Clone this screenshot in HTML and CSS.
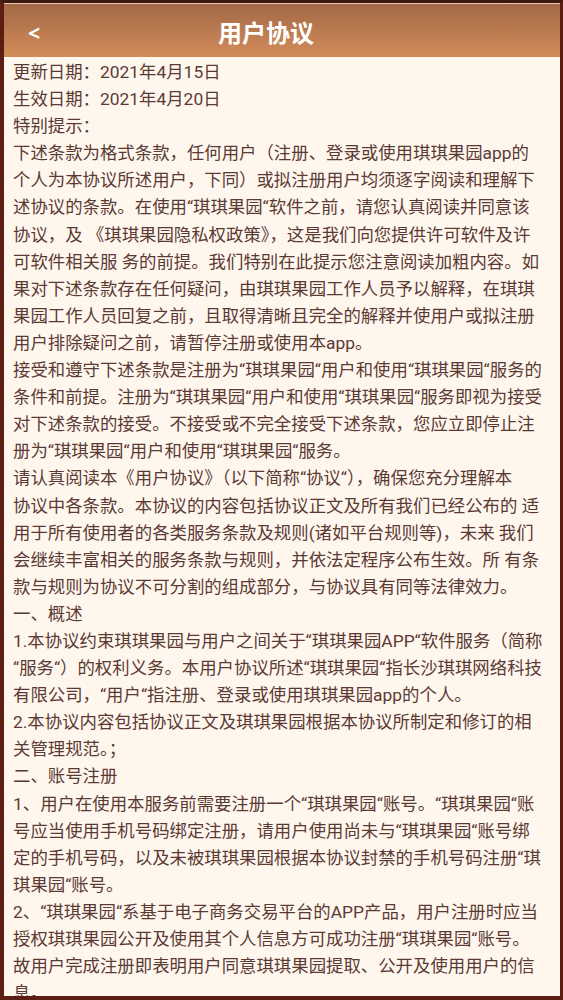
FILE: index.html
```html
<!DOCTYPE html>
<html lang="zh-CN">
<head>
<meta charset="utf-8">
<title>用户协议</title>
<link rel="stylesheet" href="styles.css">
</head>
<body>
<div class="frame">
  <header class="header">
    <span class="back">&lt;</span>
    <h1 class="title">用户协议</h1>
  </header>
  <main class="content">
    <p class="para">更新日期：2021年4月15日<br>生效日期：2021年4月20日<br>特别提示：</p>
    <p class="para">下述条款为格式条款，任何用户（注册、登录或使用琪琪果园app的<br>个人为本协议所述用户，下同）或拟注册用户均须逐字阅读和理解下<br>述协议的条款。在使用“琪琪果园“软件之前，请您认真阅读并同意该<br>协议，及 《琪琪果园隐私权政策》，这是我们向您提供许可软件及许<br>可软件相关服 务的前提。我们特别在此提示您注意阅读加粗内容。如<br>果对下述条款存在任何疑问，由琪琪果园工作人员予以解释，在琪琪<br>果园工作人员回复之前，且取得清晰且完全的解释并使用户或拟注册<br>用户排除疑问之前，请暂停注册或使用本app。</p>
    <p class="para">接受和遵守下述条款是注册为“琪琪果园“用户和使用“琪琪果园“服务的<br>条件和前提。注册为“琪琪果园“用户和使用“琪琪果园“服务即视为接受<br>对下述条款的接受。不接受或不完全接受下述条款，您应立即停止注<br>册为“琪琪果园“用户和使用“琪琪果园“服务。</p>
    <p class="para">请认真阅读本《用户协议》（以下简称“协议“），确保您充分理解本<br>协议中各条款。本协议的内容包括协议正文及所有我们已经公布的 适<br>用于所有使用者的各类服务条款及规则(诸如平台规则等)，未来 我们<br>会继续丰富相关的服务条款与规则，并依法定程序公布生效。所 有条<br>款与规则为协议不可分割的组成部分，与协议具有同等法律效力。</p>
    <p class="para">一、概述</p>
    <p class="para">1.本协议约束琪琪果园与用户之间关于“琪琪果园APP“软件服务（简称<br>“服务“）的权利义务。本用户协议所述“琪琪果园“指长沙琪琪网络科技<br>有限公司，“用户“指注册、登录或使用琪琪果园app的个人。</p>
    <p class="para">2.本协议内容包括协议正文及琪琪果园根据本协议所制定和修订的相<br>关管理规范。；</p>
    <p class="para">二、账号注册</p>
    <p class="para">1、用户在使用本服务前需要注册一个“琪琪果园“账号。“琪琪果园“账<br>号应当使用手机号码绑定注册，请用户使用尚未与“琪琪果园“账号绑<br>定的手机号码，以及未被琪琪果园根据本协议封禁的手机号码注册“琪<br>琪果园“账号。</p>
    <p class="para">2、“琪琪果园“系基于电子商务交易平台的APP产品，用户注册时应当<br>授权琪琪果园公开及使用其个人信息方可成功注册“琪琪果园“账号。<br>故用户完成注册即表明用户同意琪琪果园提取、公开及使用用户的信<br>息。</p>
  </main>
</div>
</body>
</html>
```
FILE: styles.css
```css
html, body {
  margin: 0;
  padding: 0;
  background: #5a1c12;
}

.frame {
  box-sizing: border-box;
  width: 563px;
  height: 1000px;
  overflow: hidden;
  display: flex;
  flex-direction: column;
  border-top: 3px solid #3c1a12;
  border-left: 4px solid #5c1d12;
  border-right: 3px solid #5c1d12;
  border-bottom: 4px solid #5c1d12;
  background: #fff7ee;
  font-family: Roboto, "Noto Sans CJK SC", sans-serif;
}

.header {
  flex: none;
  height: 53px;
  border-top: 1px solid #e9c9ad;
  background: linear-gradient(to bottom, #a36947 0%, #bd7c51 55%, #d28c5a 100%);
  display: grid;
  grid-template-columns: 1fr;
  align-items: center;
  color: #ffffff;
}

.back {
  grid-area: 1 / 1;
  justify-self: start;
  margin-left: 24px;
  margin-top: 4px;
  font-size: 21px;
  font-weight: 700;
  font-family: "Noto Sans", "DejaVu Sans", sans-serif;
}

.title {
  grid-area: 1 / 1;
  justify-self: center;
  margin: 2px 32px 0 0;
  font-size: 24px;
  font-weight: 700;
  letter-spacing: 0;
  font-family: "Noto Sans CJK SC", sans-serif;
}

.content {
  flex: none;
  padding: 2px 0 0 9px;
  color: #5b3a34;
  font-size: 17.4px;
  line-height: 27.1px;
}

.para {
  margin: 0;
  white-space: nowrap;
}
```
